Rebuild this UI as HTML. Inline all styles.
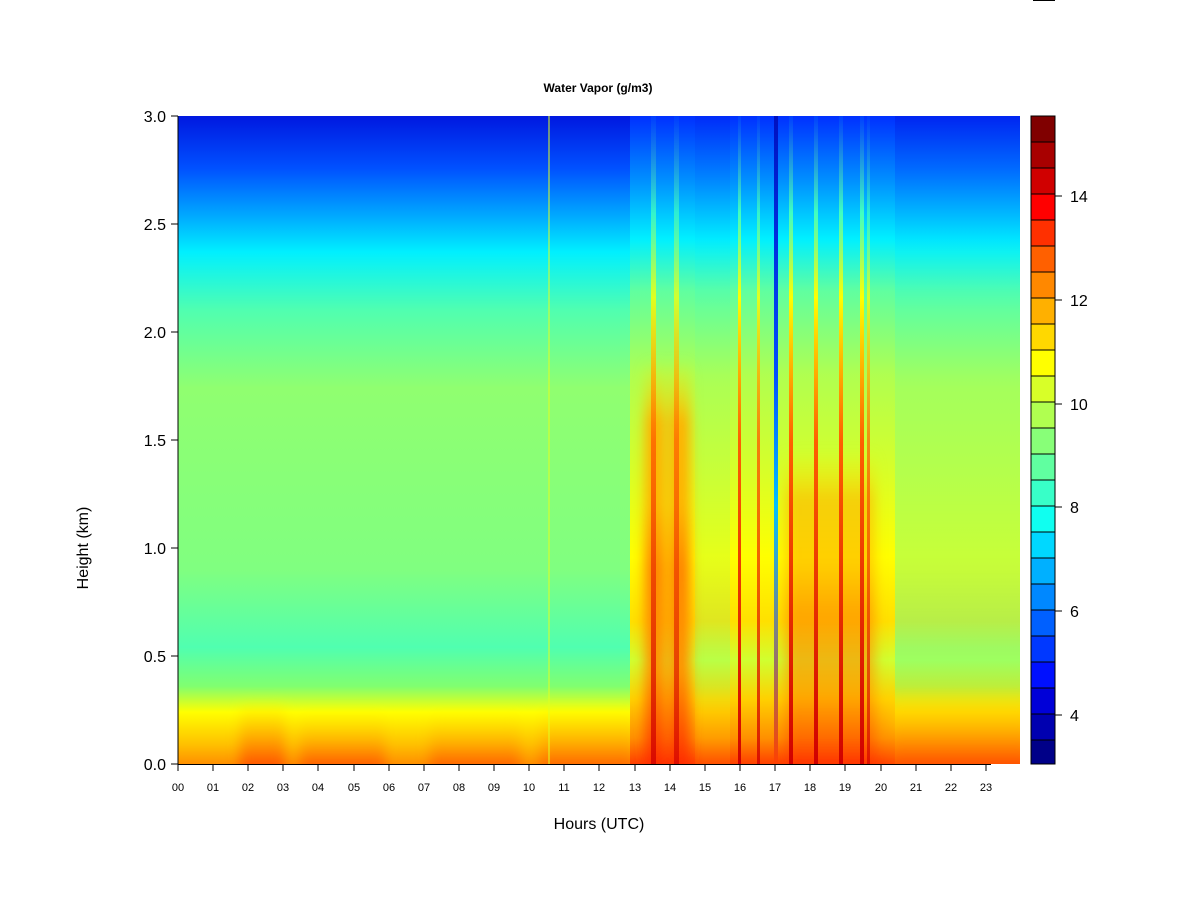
<!DOCTYPE html>
<html><head><style>
body{margin:0;background:#fff;}
svg text{font-family:"Liberation Sans",Arial,sans-serif;}
</style></head><body>
<svg width="1200" height="900" xmlns="http://www.w3.org/2000/svg">
<defs>
<filter id="bl" x="-30%" y="-30%" width="160%" height="160%"><feGaussianBlur stdDeviation="6"/></filter>
<clipPath id="cp"><rect x="178" y="116" width="842" height="648"/></clipPath>
<linearGradient id="gB" x1="0" y1="0" x2="0" y2="1">
<stop offset="0" stop-color="#0018e0"/><stop offset="0.08" stop-color="#0050ff"/><stop offset="0.16" stop-color="#00b0ff"/><stop offset="0.21" stop-color="#00f0ff"/><stop offset="0.30" stop-color="#50ffb0"/><stop offset="0.42" stop-color="#90ff70"/><stop offset="0.70" stop-color="#80ff80"/><stop offset="0.82" stop-color="#50ffb0"/><stop offset="0.88" stop-color="#80ff70"/><stop offset="0.92" stop-color="#ffff00"/><stop offset="0.97" stop-color="#ffc000"/><stop offset="1" stop-color="#ff9000"/>
</linearGradient>
<linearGradient id="gR" x1="0" y1="0" x2="0" y2="1">
<stop offset="0" stop-color="#0030ff"/><stop offset="0.10" stop-color="#0090ff"/><stop offset="0.19" stop-color="#00f0ff"/><stop offset="0.27" stop-color="#60ffa0"/><stop offset="0.40" stop-color="#b0ff50"/><stop offset="0.55" stop-color="#d8ff28"/><stop offset="0.68" stop-color="#ffff00"/><stop offset="0.78" stop-color="#ffe000"/><stop offset="0.84" stop-color="#d0ff30"/><stop offset="0.90" stop-color="#ffd000"/><stop offset="0.96" stop-color="#ff9000"/><stop offset="1" stop-color="#ff4000"/>
</linearGradient>
<linearGradient id="gE" x1="0" y1="0" x2="0" y2="1">
<stop offset="0" stop-color="#ffe000" stop-opacity="0"/><stop offset="0.15" stop-color="#ffb000"/><stop offset="0.35" stop-color="#ffb000"/><stop offset="0.5" stop-color="#ff8000"/><stop offset="0.75" stop-color="#ff9000"/><stop offset="1" stop-color="#ff2000"/>
</linearGradient>
<linearGradient id="gS" x1="0" y1="0" x2="0" y2="1">
<stop offset="0" stop-color="#0040ff"/><stop offset="0.15" stop-color="#40ffc0"/><stop offset="0.28" stop-color="#ffff00"/><stop offset="0.5" stop-color="#ff6000"/><stop offset="1" stop-color="#d00000"/>
</linearGradient>
<linearGradient id="gL" x1="0" y1="0" x2="0" y2="1">
<stop offset="0" stop-color="#0010c0"/><stop offset="0.4" stop-color="#0050ff"/><stop offset="0.6" stop-color="#00c0ff"/><stop offset="1" stop-color="#ff4000"/>
</linearGradient>
<linearGradient id="gBot" x1="0" y1="0" x2="0" y2="1">
<stop offset="0" stop-color="#ffff00" stop-opacity="0"/><stop offset="0.4" stop-color="#ffc000"/><stop offset="1" stop-color="#ff3000"/>
</linearGradient>
</defs>
<g clip-path="url(#cp)">
<rect x="178" y="116" width="842" height="648" fill="url(#gB)"/>
<g filter="url(#bl)">
<rect x="240" y="700" width="45" height="74" fill="url(#gBot)" opacity="0.9"/>
<rect x="300" y="710" width="85" height="64" fill="url(#gBot)" opacity="0.8"/>
<rect x="430" y="710" width="90" height="64" fill="url(#gBot)" opacity="0.7"/>
<rect x="540" y="705" width="95" height="69" fill="url(#gBot)" opacity="0.6"/>
</g>
<rect x="630" y="116" width="65" height="648" fill="url(#gR)"/>
<rect x="695" y="116" width="35" height="648" fill="url(#gR)" opacity="0.8"/>
<rect x="730" y="116" width="165" height="648" fill="url(#gR)"/>
<rect x="895" y="116" width="125" height="648" fill="url(#gR)" opacity="0.55"/>
<g filter="url(#bl)">
<rect x="645" y="360" width="20" height="414" fill="url(#gE)"/>
<rect x="670" y="360" width="20" height="414" fill="url(#gE)"/>
<rect x="785" y="450" width="90" height="324" fill="url(#gE)" opacity="0.6"/>
<rect x="890" y="690" width="140" height="84" fill="url(#gBot)" opacity="0.8"/>
</g>
<rect x="651" y="116" width="5" height="648" fill="url(#gS)" opacity="0.8"/>
<rect x="674" y="116" width="5" height="648" fill="url(#gS)" opacity="0.7"/>
<rect x="738" y="116" width="3" height="648" fill="url(#gS)"/>
<rect x="757" y="116" width="3" height="648" fill="url(#gS)" opacity="0.8"/>
<rect x="789" y="116" width="4" height="648" fill="url(#gS)"/>
<rect x="814" y="116" width="4" height="648" fill="url(#gS)"/>
<rect x="839" y="116" width="4" height="648" fill="url(#gS)"/>
<rect x="860" y="116" width="4" height="648" fill="url(#gS)"/>
<rect x="867" y="116" width="3" height="648" fill="url(#gS)" opacity="0.7"/>
<rect x="774" y="116" width="4" height="648" fill="url(#gL)"/>
<rect x="548" y="116" width="2" height="648" fill="#e0ff20" opacity="0.5"/>
</g>
<g stroke="#000" stroke-width="1">
<line x1="178" y1="116" x2="178" y2="764"/>
<line x1="178" y1="764.5" x2="991" y2="764.5"/>
<line x1="171" y1="116" x2="178" y2="116"/><line x1="171" y1="224" x2="178" y2="224"/><line x1="171" y1="332" x2="178" y2="332"/><line x1="171" y1="440" x2="178" y2="440"/><line x1="171" y1="548" x2="178" y2="548"/><line x1="171" y1="656" x2="178" y2="656"/><line x1="171" y1="764" x2="178" y2="764"/>
</g>
<g font-size="16" text-anchor="end" fill="#000">
<text x="166" y="122">3.0</text><text x="166" y="230">2.5</text><text x="166" y="338">2.0</text><text x="166" y="446">1.5</text><text x="166" y="554">1.0</text><text x="166" y="662">0.5</text><text x="166" y="770">0.0</text>
</g>
<g font-size="11" text-anchor="middle" fill="#000">
<text x="178" y="791">00</text><text x="213" y="791">01</text><text x="248" y="791">02</text><text x="283" y="791">03</text><text x="318" y="791">04</text><text x="354" y="791">05</text><text x="389" y="791">06</text><text x="424" y="791">07</text><text x="459" y="791">08</text><text x="494" y="791">09</text><text x="529" y="791">10</text><text x="564" y="791">11</text><text x="599" y="791">12</text><text x="635" y="791">13</text><text x="670" y="791">14</text><text x="705" y="791">15</text><text x="740" y="791">16</text><text x="775" y="791">17</text><text x="810" y="791">18</text><text x="845" y="791">19</text><text x="881" y="791">20</text><text x="916" y="791">21</text><text x="951" y="791">22</text><text x="986" y="791">23</text>
</g>
<g stroke="#000">
<line x1="178" y1="764" x2="178" y2="771"/><line x1="213" y1="764" x2="213" y2="771"/><line x1="248" y1="764" x2="248" y2="771"/><line x1="283" y1="764" x2="283" y2="771"/><line x1="318" y1="764" x2="318" y2="771"/><line x1="354" y1="764" x2="354" y2="771"/><line x1="389" y1="764" x2="389" y2="771"/><line x1="424" y1="764" x2="424" y2="771"/><line x1="459" y1="764" x2="459" y2="771"/><line x1="494" y1="764" x2="494" y2="771"/><line x1="529" y1="764" x2="529" y2="771"/><line x1="564" y1="764" x2="564" y2="771"/><line x1="599" y1="764" x2="599" y2="771"/><line x1="635" y1="764" x2="635" y2="771"/><line x1="670" y1="764" x2="670" y2="771"/><line x1="705" y1="764" x2="705" y2="771"/><line x1="740" y1="764" x2="740" y2="771"/><line x1="775" y1="764" x2="775" y2="771"/><line x1="810" y1="764" x2="810" y2="771"/><line x1="845" y1="764" x2="845" y2="771"/><line x1="881" y1="764" x2="881" y2="771"/><line x1="916" y1="764" x2="916" y2="771"/><line x1="951" y1="764" x2="951" y2="771"/><line x1="986" y1="764" x2="986" y2="771"/>
</g>
<text x="598" y="92" font-size="12" font-weight="bold" text-anchor="middle">Water Vapor (g/m3)</text>
<text x="599" y="829" font-size="16" text-anchor="middle">Hours (UTC)</text>
<text x="88" y="548" font-size="16" text-anchor="middle" transform="rotate(-90 88 548)">Height (km)</text>
<g stroke="#000" stroke-width="1">
<rect x="1031" y="116" width="24" height="26" fill="#800000"/>
<rect x="1031" y="142" width="24" height="26" fill="#a80000"/>
<rect x="1031" y="168" width="24" height="26" fill="#d00000"/>
<rect x="1031" y="194" width="24" height="26" fill="#ff0000"/>
<rect x="1031" y="220" width="24" height="26" fill="#ff3000"/>
<rect x="1031" y="246" width="24" height="26" fill="#ff6000"/>
<rect x="1031" y="272" width="24" height="26" fill="#ff8800"/>
<rect x="1031" y="298" width="24" height="26" fill="#ffb000"/>
<rect x="1031" y="324" width="24" height="26" fill="#ffd800"/>
<rect x="1031" y="350" width="24" height="26" fill="#ffff00"/>
<rect x="1031" y="376" width="24" height="26" fill="#d8ff28"/>
<rect x="1031" y="402" width="24" height="26" fill="#b0ff50"/>
<rect x="1031" y="428" width="24" height="26" fill="#88ff78"/>
<rect x="1031" y="454" width="24" height="26" fill="#60ffa0"/>
<rect x="1031" y="480" width="24" height="26" fill="#38ffc8"/>
<rect x="1031" y="506" width="24" height="26" fill="#10fff0"/>
<rect x="1031" y="532" width="24" height="26" fill="#00d8ff"/>
<rect x="1031" y="558" width="24" height="26" fill="#00b0ff"/>
<rect x="1031" y="584" width="24" height="26" fill="#0088ff"/>
<rect x="1031" y="610" width="24" height="26" fill="#0060ff"/>
<rect x="1031" y="636" width="24" height="26" fill="#0038ff"/>
<rect x="1031" y="662" width="24" height="26" fill="#0010ff"/>
<rect x="1031" y="688" width="24" height="26" fill="#0000d8"/>
<rect x="1031" y="714" width="24" height="26" fill="#0000b0"/>
<rect x="1031" y="740" width="24" height="24" fill="#000088"/>
<line x1="1055" y1="196" x2="1062" y2="196"/><line x1="1055" y1="300" x2="1062" y2="300"/><line x1="1055" y1="404" x2="1062" y2="404"/><line x1="1055" y1="507" x2="1062" y2="507"/><line x1="1055" y1="611" x2="1062" y2="611"/><line x1="1055" y1="715" x2="1062" y2="715"/>
<line x1="1033" y1="0.5" x2="1055" y2="0.5"/>
</g>
<g font-size="16" fill="#000">
<text x="1070" y="202">14</text><text x="1070" y="306">12</text><text x="1070" y="410">10</text><text x="1070" y="513">8</text><text x="1070" y="617">6</text><text x="1070" y="721">4</text>
</g>
</svg>
</body></html>
